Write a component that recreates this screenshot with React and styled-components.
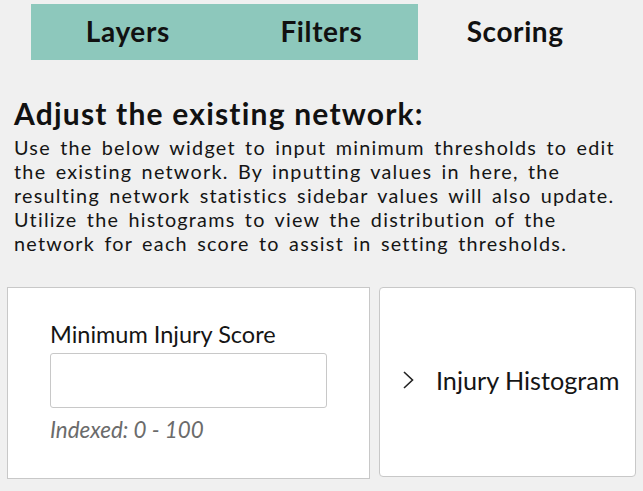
import React from "react";
import styled, { createGlobalStyle } from "styled-components";

const Global = createGlobalStyle`
  html, body { margin: 0; padding: 0; background: #f0f0f0; }
  body { font-family: Lato, "Open Sans", sans-serif; color: #151515; }
  * { box-sizing: border-box; }
`;

const Page = styled.div`
  width: 643px;
  min-height: 491px;
  padding-top: 4px;
`;

const TabBar = styled.div`
  display: grid;
  grid-template-columns: repeat(3, 1fr);
  margin: 0 31px;
  height: 56px;
`;

const Tab = styled.div`
  display: flex;
  align-items: center;
  justify-content: center;
  padding-bottom: 2px;
  background: ${(p) => (p.$active ? "transparent" : "#8dc8bc")};
  font-size: 28px;
  font-weight: 700;
  letter-spacing: 0.6px;
  color: #111;
`;

const Intro = styled.section`
  padding: 0 14px;
  margin-top: 35px;
`;

const Heading = styled.h2`
  margin: 0;
  font-size: 30px;
  line-height: 36px;
  font-weight: 700;
  letter-spacing: 1.2px;
  color: #111;
`;

const Body = styled.p`
  margin: 4px 0 0;
  font-size: 19.8px;
  line-height: 24px;
  letter-spacing: 1.25px;
  word-spacing: 3px;
  color: #151515;
  white-space: nowrap;
`;

const Cards = styled.div`
  display: grid;
  grid-template-columns: 363px 257px;
  gap: 9px;
  padding: 0 7px;
  margin-top: 32px;
  align-items: start;
`;

const InputCard = styled.div`
  background: #fff;
  border: 1px solid #c8c8c8;
  height: 192px;
  padding: 32px 42px 0;
`;

const Label = styled.label`
  display: block;
  font-size: 23.5px;
  line-height: 28px;
  color: #151515;
`;

const Input = styled.input`
  display: block;
  width: 277px;
  height: 55px;
  margin-top: 5px;
  border: 1px solid #c8c8c8;
  border-radius: 3px;
  background: #fff;
  outline: none;
`;

const Hint = styled.div`
  margin-top: 8.5px;
  font-size: 22.4px;
  line-height: 26px;
  font-style: italic;
  color: #6b6b6b;
`;

const HistogramCard = styled.button`
  display: flex;
  align-items: center;
  gap: 22px;
  height: 190px;
  padding: 0 0 5px 23px;
  background: #fff;
  border: 1px solid #c8c8c8;
  border-radius: 4px;
  font-family: inherit;
  font-size: 25.2px;
  color: #151515;
  text-align: left;
  cursor: pointer;
`;

const Chevron = () => (
  <svg width="11" height="18" viewBox="0 0 11 18" aria-hidden="true">
    <path d="M1 1 L9.5 9 L1 17" fill="none" stroke="#222" strokeWidth="1.6" />
  </svg>
);

export default function App() {
  return (
    <Page>
      <Global />
      <TabBar>
        <Tab>Layers</Tab>
        <Tab>Filters</Tab>
        <Tab $active>Scoring</Tab>
      </TabBar>
      <Intro>
        <Heading>Adjust the existing network:</Heading>
        <Body>
          Use the below widget to input minimum thresholds to edit
          <br />
          the existing network. By inputting values in here, the
          <br />
          resulting network statistics sidebar values will also update.
          <br />
          Utilize the histograms to view the distribution of the
          <br />
          network for each score to assist in setting thresholds.
        </Body>
      </Intro>
      <Cards>
        <InputCard>
          <Label htmlFor="injury">Minimum Injury Score</Label>
          <Input id="injury" type="text" />
          <Hint>Indexed: 0 - 100</Hint>
        </InputCard>
        <HistogramCard type="button">
          <Chevron />
          <span>Injury Histogram</span>
        </HistogramCard>
      </Cards>
    </Page>
  );
}
